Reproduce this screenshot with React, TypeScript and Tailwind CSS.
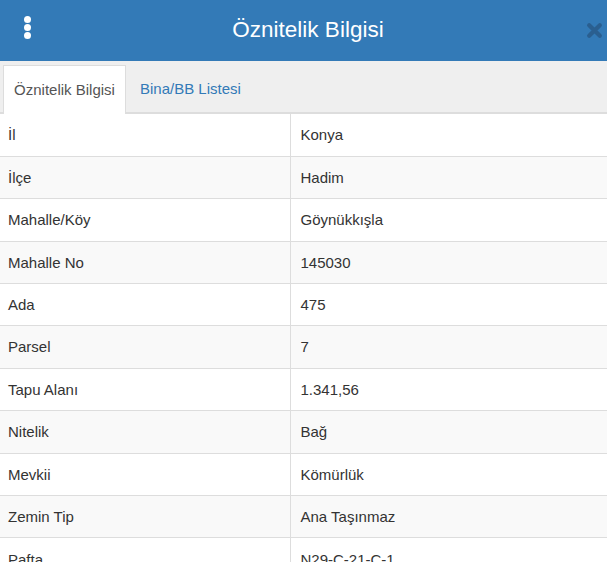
const rows: [string, string][] = [
  ["İl", "Konya"],
  ["İlçe", "Hadim"],
  ["Mahalle/Köy", "Göynükkışla"],
  ["Mahalle No", "145030"],
  ["Ada", "475"],
  ["Parsel", "7"],
  ["Tapu Alanı", "1.341,56"],
  ["Nitelik", "Bağ"],
  ["Mevkii", "Kömürlük"],
  ["Zemin Tip", "Ana Taşınmaz"],
  ["Pafta", "N29-C-21-C-1"],
];

export default function App() {
  return (
    <div className="h-[562px] w-[607px] overflow-hidden bg-white font-['Liberation_Sans',Arial,sans-serif]">
      <header className="relative flex h-[61px] items-center justify-center bg-[#337ab7]">
        <div className="absolute left-[24px] top-[16px] flex flex-col gap-[1px]">
          <span className="h-[7px] w-[7px] rounded-full bg-white" />
          <span className="h-[7px] w-[7px] rounded-full bg-white" />
          <span className="h-[7px] w-[7px] rounded-full bg-white" />
        </div>
        <h1 className="ml-[9px] text-[22.5px] leading-none text-white">Öznitelik Bilgisi</h1>
        <svg className="absolute left-[586px] top-[22px] h-[17px] w-[17px] blur-[0.4px]" viewBox="0 0 16 16">
          <path d="M3 3 L13 13 M13 3 L3 13" stroke="#2a5f90" strokeWidth="4" strokeLinecap="round" />
        </svg>
      </header>

      <nav className="flex h-[53px] items-end border-b-2 border-[#dddddd] bg-[#efefef] pl-[3px]">
        <div className="-mb-[2px] flex h-[49px] w-[123px] items-center justify-center border border-b-0 border-[#dddddd] bg-white pt-[1px] text-[15px] text-[#555555]">
          Öznitelik Bilgisi
        </div>
        <div className="flex h-[47px] items-center pl-[14px] pt-[1px] text-[15px] text-[#337ab7]">Bina/BB Listesi</div>
      </nav>

      <table className="w-full border-collapse text-[15px] text-[#333333]">
        <tbody>
          {rows.map(([label, value], i) => (
            <tr key={label} className={`h-[42.4px] border-t border-[#dddddd] first:border-t-0 ${i % 2 === 1 ? "bg-[#f9f9f9]" : "bg-white"}`}>
              <td className="w-[290px] border-r border-[#dddddd] pl-[8px] pt-[1px] align-middle">{label}</td>
              <td className="pl-[10px] pt-[1px] align-middle">{value}</td>
            </tr>
          ))}
        </tbody>
      </table>
    </div>
  );
}
